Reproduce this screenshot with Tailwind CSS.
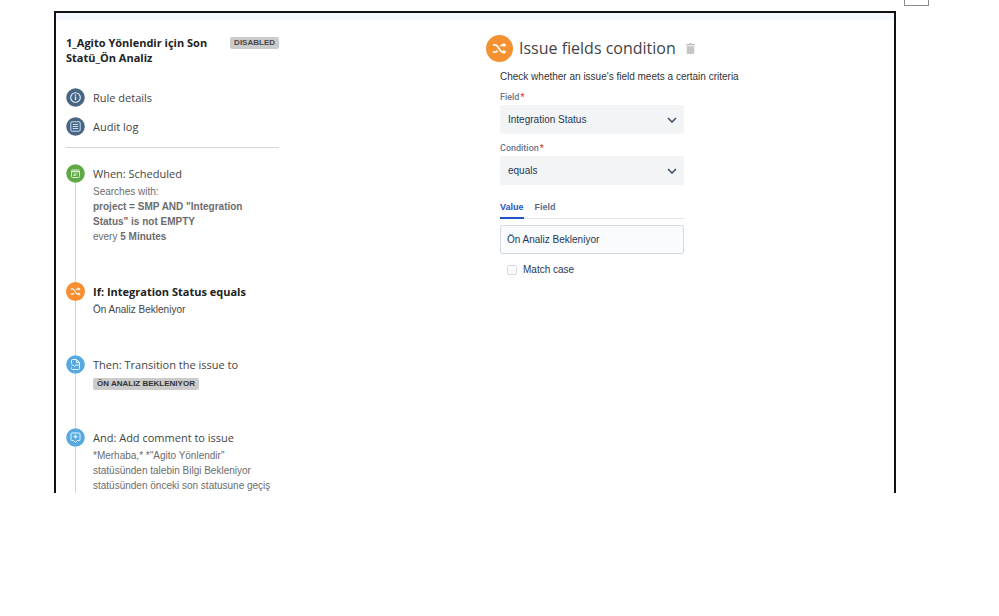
<!DOCTYPE html>
<html lang="en">
<head>
    <meta charset="UTF-8">
    <meta name="viewport" content="width=device-width, initial-scale=1.0">
    <title>Automation rule - Issue fields condition</title>
    <script src="https://cdn.jsdelivr.net/npm/@tailwindcss/browser@4"></script>
</head>
<body class="bg-white font-['Liberation_Sans',Arial,sans-serif] text-[10px] text-[#333]">
    <!-- shared shuffle icon -->
    <svg class="hidden">
        <symbol id="shuffle" viewBox="0 0 16 16" fill="none" stroke="currentColor" stroke-width="1.8">
            <path d="M1 4.2h2.2c1.3 0 2 .6 2.7 1.6l3 4.4c.7 1 1.4 1.6 2.7 1.6H13M1 11.8h2.2c1.2 0 1.9-.5 2.6-1.4M9 5.6c.7-.9 1.4-1.4 2.6-1.4H13"/>
            <path d="M12.2 1.8 15.4 4.2 12.2 6.6zM12.2 9.4l3.2 2.4-3.2 2.4z" fill="currentColor" stroke="none"/>
        </symbol>
    </svg>

    <header class="flex h-[11px] justify-end pr-[70px]">
        <div class="h-[6px] w-[25px] border border-t-0 border-[#8c8c8c]"></div>
    </header>

    <main class="ml-[54px] mr-[103px] border-2 border-b-0 border-[#111]">
        <div class="h-[7px] bg-[#f4f8fe]"></div>
        <div class="grid grid-cols-[430px_1fr] pt-[15px]">
            <aside class="ml-[10px] w-[213px]">
                <div class="flex items-start justify-between">
                    <h1 class="w-[150px] font-['Open_Sans',sans-serif] text-[11px] leading-[15px] font-bold text-[#222]">1_Agito Yönlendir için Son Statü_Ön Analiz</h1>
                    <span class="mt-[2px] rounded-xs bg-[#cbcbcb] px-1 text-[8px] leading-[12px] font-bold text-[#484848]">DISABLED</span>
                </div>

                <nav class="mt-[23px] flex flex-col gap-[10px] border-b border-[#d4d4d4] pb-[11px] font-['Open_Sans',sans-serif] text-[11px] leading-[19px] text-[#444]">
                    <a href="#details" class="flex items-center gap-2">
                        <svg class="size-[19px]" viewBox="0 0 19 19" fill="none">
                            <circle cx="9.5" cy="9.5" r="9.3" fill="#486684"/>
                            <circle cx="9.5" cy="9.5" r="4.8" stroke="#e5f0fa" stroke-width="1.1"/>
                            <path d="M9.5 8.6v3.5M9.5 6.5v1.2" stroke="#e5f0fa" stroke-width="1.4"/>
                        </svg>
                        Rule details
                    </a>
                    <a href="#audit" class="flex items-center gap-2">
                        <svg class="size-[19px]" viewBox="0 0 19 19" fill="none">
                            <circle cx="9.5" cy="9.5" r="9.3" fill="#486684"/>
                            <rect x="4.8" y="4.8" width="9.4" height="9.4" rx="1.2" stroke="#c8dcf0"/>
                            <path d="M6.8 7.5h5.4M6.8 9.5h5.4M6.8 11.5h5.4" stroke="#c8dcf0"/>
                        </svg>
                        Audit log
                    </a>
                </nav>

                <ol class="mt-[16px] leading-[15px] text-[#6c6c6c]">
                    <li class="flex gap-2">
                        <div class="flex w-[19px] flex-col items-center">
                            <svg class="size-[19px]" viewBox="0 0 19 19" fill="none">
                                <circle cx="9.5" cy="9.5" r="9.3" fill="#5fa845"/>
                                <rect x="5.5" y="6" width="8" height="7.5" rx="1" stroke="#d5f0c8"/>
                                <path d="M5.5 7.5h8" stroke="#d5f0c8" stroke-width="1.5"/>
                                <path d="M7.5 10h4M7.5 11.5h2.5" stroke="#d5f0c8"/>
                            </svg>
                            <div class="w-px flex-1 bg-[#d4d4d4]"></div>
                        </div>
                        <div class="flex-1 pb-[38px]">
                            <h2 class="font-['Open_Sans',sans-serif] text-[11px] leading-[20px] text-[#444]">When: Scheduled</h2>
                            <p>Searches with:<br><b>project = SMP AND "Integration<br>Status" is not EMPTY</b><br>every <b>5 Minutes</b></p>
                        </div>
                    </li>
                    <li class="flex gap-2">
                        <div class="flex w-[19px] flex-col items-center">
                            <div class="flex size-[19px] items-center justify-center rounded-full bg-[#f88e2f] text-white">
                                <svg class="size-[11px]"><use href="#shuffle"/></svg>
                            </div>
                            <div class="w-px flex-1 bg-[#d4d4d4]"></div>
                        </div>
                        <div class="flex-1 pb-[38px]">
                            <h2 class="font-['Open_Sans',sans-serif] text-[11px] leading-[20px] font-bold text-[#222]">If: Integration Status equals</h2>
                            <p class="text-[#444]">Ön Analiz Bekleniyor</p>
                        </div>
                    </li>
                    <li class="flex gap-2">
                        <div class="flex w-[19px] flex-col items-center">
                            <svg class="size-[19px]" viewBox="0 0 19 19" fill="none" stroke="#e3f5ff">
                                <circle cx="9.5" cy="9.5" r="9.3" fill="#57a9df" stroke="none"/>
                                <path d="M5.5 8.5v-3q0-1 1-1h4l3 3v6q0 1-1 1h-6q-1 0-1-1v-1M10.5 4.5v3h3M5.5 10h1.5l1.5 1.5L10 10h3.5"/>
                            </svg>
                            <div class="w-px flex-1 bg-[#d4d4d4]"></div>
                        </div>
                        <div class="flex-1 pb-[38px]">
                            <h2 class="font-['Open_Sans',sans-serif] text-[11px] leading-[20px] text-[#444]">Then: Transition the issue to</h2>
                            <span class="mt-[3px] block w-fit rounded-xs bg-[#cbcbcb] px-1 text-[8px] leading-[12px] font-bold text-[#333]">ÖN ANALIZ BEKLENIYOR</span>
                        </div>
                    </li>
                    <li class="flex gap-2">
                        <div class="flex w-[19px] flex-col items-center">
                            <svg class="size-[19px]" viewBox="0 0 19 19" fill="none" stroke="#e3f5ff">
                                <circle cx="9.5" cy="9.5" r="9.3" fill="#57a9df" stroke="none"/>
                                <path d="M6 5h7q1 0 1 1v5.5q0 1-1 1h-1.500L9.500 14.500 7.500 12.500H6q-1 0-1-1V6q0-1 1-1z"/>
                                <path d="M9.5 6.800v3.800M7.600 8.700h3.800" stroke-width="1.3"/>
                            </svg>
                            <div class="w-px flex-1 bg-[#d4d4d4]"></div>
                        </div>
                        <div class="flex-1">
                            <h2 class="font-['Open_Sans',sans-serif] text-[11px] leading-[20px] text-[#444]">And: Add comment to issue</h2>
                            <p>*Merhaba,* *"Agito Yönlendir"<br>statüsünden talebin Bilgi Bekleniyor<br>statüsünden önceki son statusune geçiş</p>
                        </div>
                    </li>
                </ol>
            </aside>

            <section>
                <div class="flex items-center gap-[6px]">
                    <div class="flex size-[27px] items-center justify-center rounded-full bg-[#f49231] text-white">
                        <svg class="size-[15px]"><use href="#shuffle"/></svg>
                    </div>
                    <h2 class="font-['Open_Sans',sans-serif] text-[16px] leading-[27px] text-[#444]">Issue fields condition</h2>
                    <button type="button" aria-label="Delete" class="ml-1 text-[#c6c6c6]">
                        <svg class="h-[11px] w-[9px]" viewBox="0 0 9 11" fill="currentColor">
                            <path d="M0 1h3V0h3v1h3v1.500H0zM.7 3.300h7.600V10q0 1-1 1H1.700q-1 0-1-1z"/>
                        </svg>
                    </button>
                </div>

                <form class="ml-[14px] w-[184px] text-[#253858]">
                    <p class="mt-[7px] leading-[15px] whitespace-nowrap text-[#333]">Check whether an issue's field meets a certain criteria</p>

                    <label for="field" class="mt-[6px] block font-[Roboto,sans-serif] text-[9px] leading-[14px] font-medium text-[#6b778c]">Field<span class="ml-px text-[#de350b]">*</span></label>
                    <div class="mt-[1px] grid items-center">
                        <select id="field" class="col-start-1 row-start-1 h-[29px] appearance-none rounded-xs bg-[#f3f4f6] px-2">
                            <option>Integration Status</option>
                        </select>
                        <svg class="pointer-events-none col-start-1 row-start-1 mr-[7px] h-[6px] w-[10px] justify-self-end" viewBox="0 0 10 6" fill="none" stroke="#42526e" stroke-width="1.6"><path d="m1 1 4 4 4-4"/></svg>
                    </div>

                    <label for="condition" class="mt-[7px] block font-[Roboto,sans-serif] text-[9px] leading-[14px] font-medium text-[#6b778c]">Condition<span class="ml-px text-[#de350b]">*</span></label>
                    <div class="mt-[1px] grid items-center">
                        <select id="condition" class="col-start-1 row-start-1 h-[29px] appearance-none rounded-xs bg-[#f3f4f6] px-2">
                            <option>equals</option>
                        </select>
                        <svg class="pointer-events-none col-start-1 row-start-1 mr-[7px] h-[6px] w-[10px] justify-self-end" viewBox="0 0 10 6" fill="none" stroke="#42526e" stroke-width="1.6"><path d="m1 1 4 4 4-4"/></svg>
                    </div>

                    <div class="mt-[13px] flex gap-[11px] border-b border-[#e4e6ea] text-[9px] leading-[19px] font-bold text-[#5e6c84]">
                        <button type="button" class="-mb-px border-b-2 border-[#1f55c0] text-[#1f55c0]">Value</button>
                        <button type="button" class="-mb-px border-b-2 border-transparent">Field</button>
                    </div>

                    <input type="text" aria-label="Value" value="Ön Analiz Bekleniyor" class="mt-[6px] block h-[29px] w-full rounded-xs border border-[#d5dae2] bg-[#fafbfc] px-[6px]">

                    <label class="mt-2 ml-[7px] flex items-center gap-[6px] leading-[15px]">
                        <input type="checkbox" class="size-[10px] appearance-none rounded-xs border border-[#d5dae2] bg-[#fafbfc]">
                        Match case
                    </label>
                </form>
            </section>
        </div>
    </main>
</body>
</html>
